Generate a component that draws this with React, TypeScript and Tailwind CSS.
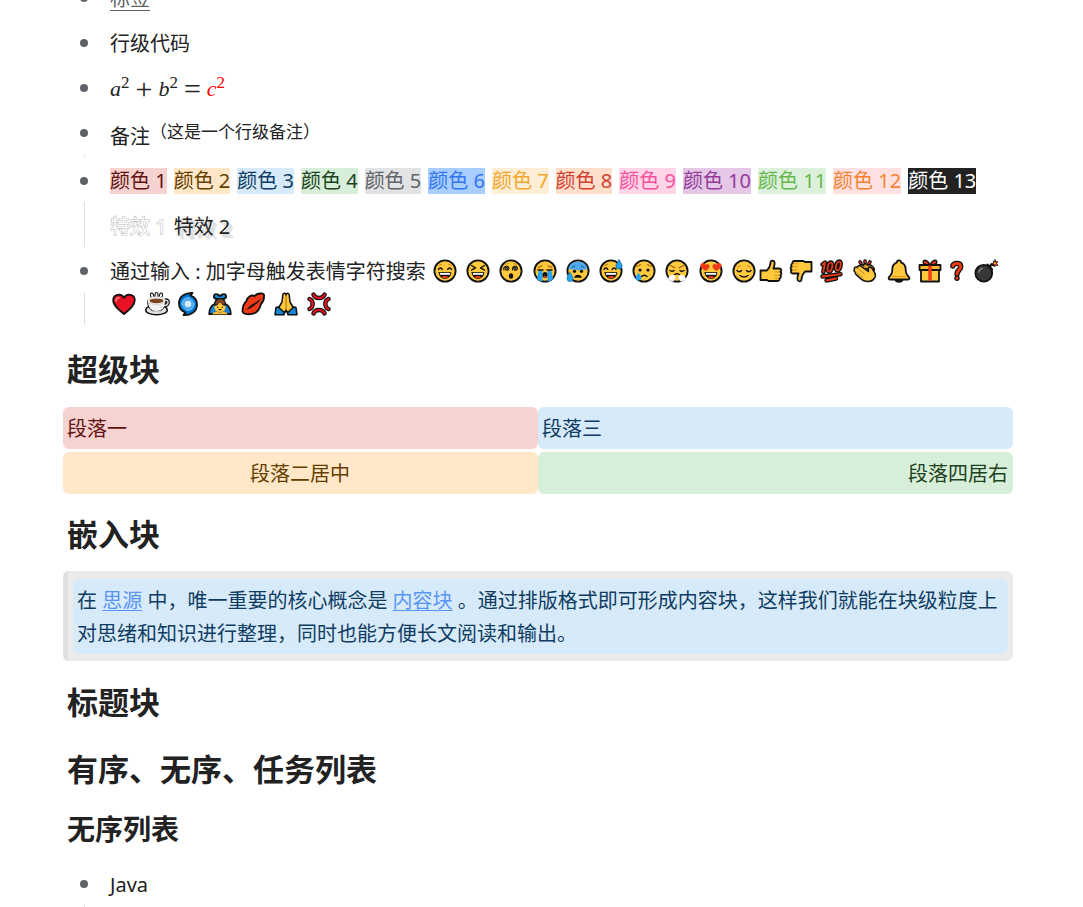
import type { ReactNode } from "react";

const INK = "#111111";
const YELLOW = "#ffc83d";
const BLUE = "#26a6f2";

type GlyphProps = { label: string; width?: string; children: ReactNode };

function Glyph({ label, width = "w-[28px]", children }: GlyphProps) {
  return (
    <svg
      role="img"
      aria-label={label}
      viewBox="0 0 24 24"
      className={`inline-block h-6 align-[-4px] ${width}`}
      fill="none"
      stroke={INK}
      strokeWidth="1.8"
      strokeLinecap="round"
      strokeLinejoin="round"
    >
      {children}
    </svg>
  );
}

function Face({ label, children }: { label: string; children: ReactNode }) {
  return (
    <Glyph label={label}>
      <circle cx="12" cy="12" r="10.600" fill={YELLOW} strokeWidth="1.800" />
      <g strokeWidth="1.400">{children}</g>
    </Glyph>
  );
}

function OpenMouth() {
  return (
    <>
      <path d="M6 13.500h12c-.3 3.800-2.600 6-6 6s-5.700-2.200-6-6z" fill={INK} strokeWidth=".6" />
      <path d="M7 14h10v1.800H7z" fill="#fff" stroke="none" />
      <path d="M8.500 18c2-1.500 5-1.500 7 0-2 1.600-5 1.600-7 0z" fill="#f03a17" stroke="none" />
    </>
  );
}

const faces: ReactNode[] = [
  <Face label="笑脸">
    <path d="M5.500 10.500c.8-2 3-2 3.800 0M14.700 10.500c.8-2 3-2 3.800 0" />
    <path d="M6 6.300l2.500-1M18 6.300l-2.500-1" stroke="#c98b16" strokeWidth="1" />
    <OpenMouth />
  </Face>,
  <Face label="大笑">
    <path d="M5.500 6.500l4 2.300-4 2.300M18.500 6.500l-4 2.300 4 2.300" />
    <OpenMouth />
  </Face>,
  <Face label="晕">
    <path d="M8 9.800c.8-.8 0-1.600-.8-1.200-1.300.8-.6 2.900 1 2.700 2-.2 2.200-3 .6-3.800-2.400-1-4.800 1.200-3.800 3.400M16.500 9.800c.8-.8 0-1.600-.8-1.200-1.300.8-.6 2.900 1 2.700 2-.2 2.200-3 .6-3.800-2.400-1-4.300 1.200-3.600 3.400" strokeWidth="1.100" />
    <path d="M6 5.500l3-1M15 4.500l3 1" stroke="#c98b16" strokeWidth="1" />
    <ellipse cx="12" cy="17" rx="2.200" ry="2.700" fill={INK} stroke="none" />
  </Face>,
  <Face label="大哭">
    <path d="M5.300 8.500l3.500-1.700M18.700 8.500l-3.500-1.700" stroke="#b27811" />
    <path d="M5 11h5M14 11h5" />
    <path d="M5.500 12h4v10.500c-2 0-4-1-5.500-2.500zM14.500 12h4l1.500 8c-1.500 1.500-3.500 2.500-5.500 2.500z" fill={BLUE} stroke="none" />
    <ellipse cx="12" cy="16" rx="2.500" ry="3" fill={INK} stroke="none" />
    <ellipse cx="12" cy="17.700" rx="1.500" ry="1" fill="#f03a17" stroke="none" />
  </Face>,
  <Face label="冷汗">
    <path d="M2.300 10C3.200 5.200 7 2.400 12 2.400s8.800 2.800 9.700 7.600c-6 1.600-13.500 1.600-19.400 0z" fill="#4ea9ed" stroke="none" />
    <path d="M6 8.500l3-1.800M18 8.500l-3-1.800" stroke="#145c96" strokeWidth="1" />
    <circle cx="8.500" cy="12.300" r="1.600" fill={INK} stroke="none" />
    <circle cx="15.500" cy="12.300" r="1.600" fill={INK} stroke="none" />
    <path d="M9 18c1.500-2 4.500-2 6 0z" fill={INK} />
    <path d="M4 13.500c2 3 3 4.500 3 6a3 3 0 0 1-6 0c0-1.500 1-3.500 3-6z" fill={BLUE} stroke="#0875ba" strokeWidth=".7" />
  </Face>,
  <Face label="尴尬">
    <path d="M5 10.500c.8-2 3-2 3.800 0M13.200 10.500c.8-2 3-2 3.800 0" />
    <path d="M6 6.300l2.500-1" stroke="#c98b16" />
    <OpenMouth />
    <path d="M20 1c1.800 2.800 3 4.400 3 6a3 3 0 0 1-6 0c0-1.600 1.200-3.200 3-6z" fill={BLUE} stroke="#075b92" strokeWidth=".8" />
  </Face>,
  <Face label="流泪">
    <path d="M5 7.500l3.500-1.800M19 7.500l-3.500-1.800" stroke="#b27811" />
    <circle cx="8" cy="11" r="1.600" fill={INK} stroke="none" />
    <circle cx="16" cy="11" r="1.600" fill={INK} stroke="none" />
    <path d="M9.500 17.500c1.500-1.700 4-1.700 5.500 0" />
    <path d="M6.500 13.500c1.800 2.500 2.700 4 2.700 5.200a2.700 2.700 0 0 1-5.400 0c0-1.200 1-2.700 2.700-5.200z" fill={BLUE} stroke="none" />
  </Face>,
  <Face label="生气">
    <path d="M5.500 6.500l4.500 2.300M18.500 6.500L14 8.800" stroke="#a56d10" />
    <path d="M5 11.500c1.400 1 3 1 4 0M15 11.500c1 1 2.600 1 4 0" />
    <path d="M9.500 15.500c1.500-1 3.500-1 5 0" />
    <path d="M9.800 16.700c-3-1.500-5.800 0-6.300 2.500-.2 1.500 1 2.300 2 2 1.300 1.700 3.700 1.300 4-.8 1.200-.8 1.300-2.600.3-3.700zM14.200 16.700c3-1.500 5.800 0 6.300 2.500.2 1.500-1 2.300-2 2-1.300 1.700-3.700 1.300-4-.8-1.200-.8-1.300-2.600-.3-3.700z" fill="#fff" stroke="#ddd" strokeWidth=".5" />
  </Face>,
  <Face label="喜欢">
    <OpenMouth />
    <path d="M6.800 12C3.500 10 .8 8.300 1.600 5.800c.8-2.300 3.800-2.200 4.600 0 1.700-1.800 4.500-.7 4.300 1.700-.1 2-2 3.200-3.700 4.500zM17.200 12c3.300-2 6-3.700 5.200-6.200-.8-2.300-3.800-2.200-4.600 0-1.700-1.800-4.500-.7-4.300 1.700.1 2 2 3.200 3.700 4.500z" fill="#f03a17" stroke="none" />
  </Face>,
  <Face label="安心">
    <path d="M5 11.500c1.300 1.600 3.300 1.600 4.500 0M14.500 11.500c1.200 1.600 3.200 1.600 4.500 0M8 16.500c2.300 1.800 5.700 1.800 8 0" />
    <path d="M5.500 8c1-.8 2-1.200 3.200-1.200M18.500 8c-1-.8-2-1.200-3.200-1.200" stroke="#c98b16" strokeWidth="1" />
  </Face>,
];

const thumbPath = "M1.500 11.500H8c2.300-2.500 3.500-5 3.600-8.500.1-2 3.800-2 4 1 .1 2-.5 4-1.200 5.500h6c2 0 2.500 2.500.8 3.300 1.700.8 1.500 3 .1 3.500 1 1 .6 2.800-.8 3.200.4 1.400-.5 2.500-2 2.500H9.500L8 21H1.500z";

const symbols: ReactNode[] = [
  <Glyph label="赞" width="w-[26px]">
    <path d={thumbPath} fill={YELLOW} />
    <path d="M16 13h4M16 16.300h4M16 19.300h3" stroke="#c98b16" strokeWidth=".8" />
  </Glyph>,
  <Glyph label="踩" width="w-[24px]">
    <g transform="rotate(180 12 12)">
      <path d={thumbPath} fill={YELLOW} />
      <path d="M16 13h4M16 16.300h4M16 19.300h3" stroke="#c98b16" strokeWidth=".8" />
    </g>
  </Glyph>,
  <Glyph label="一百分">
    <path d="M2.500 5.500L5 3.500 3.300 13M10.700 3.500c-3 .2-4.500 9-1.600 9.200C12.200 12.500 13.700 3.300 10.700 3.500zM19.300 2.500c-3.300.2-4.900 8.700-1.900 9C20.600 11.300 22 2.200 19.300 2.500z" strokeWidth="4.400" />
    <path d="M2.500 17.500l18-2.300M6.500 21.500l9.500-2" strokeWidth="4.400" />
    <path d="M2.500 5.500L5 3.500 3.300 13M10.700 3.500c-3 .2-4.500 9-1.600 9.200C12.200 12.500 13.700 3.300 10.700 3.500zM19.300 2.500c-3.300.2-4.900 8.700-1.900 9C20.600 11.300 22 2.200 19.300 2.500z" stroke="#f03a17" strokeWidth="1.700" />
    <path d="M2.500 17.500l18-2.300M6.500 21.500l9.500-2" stroke="#f03a17" strokeWidth="1.800" />
  </Glyph>,
  <Glyph label="鼓掌">
    <path d="M8 4.500L7 3M12 3.500V2M16 4.500L17 3" strokeWidth="3.600" />
    <path d="M8 4.500L7 3M12 3.500V2M16 4.500L17 3" stroke="#e0301e" strokeWidth="1.400" />
    <path d="M6.500 9c-.3-3.500 2.200-4.500 4-2.500.3-2 2.800-2.500 4.300-.5C18 5 21 8 21.500 11z" fill="#d69a1c" strokeWidth="1.500" />
    <path d="M1.500 10.500c-.8-2 1-3.300 2.700-2C4.700 6.500 6.900 6 8.300 7.500l7 5c.3-2-.3-4 1.200-4.500 2.700-.6 3.300 3.200 5 5.500 2.700 4-1.200 9-6.300 9-3.800 0-6.500-1.500-9.200-4.300-2-2-4.500-2.700-3.800-5-1.200-.7-1.500-1.800-.7-2.700z" fill={YELLOW} strokeWidth="1.500" />
    <path d="M4.500 9l7 6M2.800 13.200l7 5.500" stroke="#b77b14" strokeWidth=".9" />
  </Glyph>,
  <Glyph label="铃铛">
    <path d="M8.500 20.500c.5 3 6.500 3 7 0z" fill="#d69a1c" />
    <path d="M12 1.300c1.500 0 2 1 2 2 3.500 1.200 4.700 3.700 4.700 7.200 0 4 .9 5.500 3.300 7.500.7 1 .4 2.500-1 2.500H3c-1.400 0-1.700-1.500-1-2.500 2.400-2 3.300-3.500 3.300-7.500 0-3.500 1.200-6 4.700-7.200 0-1 .5-2 2-2z" fill={YELLOW} />
    <path d="M5.500 17.500h13" stroke="#d69a1c" strokeWidth="1.200" />
  </Glyph>,
  <Glyph label="礼物" width="w-[24px]">
    <path d="M3 10h18v12.500H3z" fill={YELLOW} />
    <path d="M1.500 6h21v5h-21z" fill="#f5b52d" />
    <path d="M10.300 6h3.400v15.600h-3.400z" fill="#f03a17" stroke="none" />
    <path d="M12 6C8 6 4 5 5.500 2c1.500-2 5 .5 6.500 4 1.500-3.500 5-6 6.500-4C20 5 16 6 12 6z" fill="#f03a17" strokeWidth="1.400" />
  </Glyph>,
  <Glyph label="问号" width="w-[20px]">
    <path d="M7 6c1-4 9-4.500 9.500.5.4 4-4.500 4.500-4.500 9M12 20.500v.1" strokeWidth="6.500" />
    <path d="M7 6c1-4 9-4.500 9.500.5.4 4-4.500 4.500-4.500 9M12 20.500v.1" stroke="#f03a17" strokeWidth="3.500" />
  </Glyph>,
  <Glyph label="炸弹">
    <path d="M15.500 8l2-2.700 2.200.7" strokeWidth="2.400" />
    <path d="M13.500 5.500l4.800 4.800-3 1.500-3.300-3.300z" fill="#333" />
    <circle cx="9.800" cy="14.200" r="8.400" fill="#373737" />
    <path d="M5 13c.3-2 1.500-3.200 3.400-3.700" stroke="#888" strokeWidth="1.300" />
    <path d="M21 .8l.7 2 2-.3-1 2 1.200 2-2.200-.4-1 1.700-.7-2-2-.6 1.700-1.200-.5-2 1.600.9z" fill="#f03a17" strokeWidth=".8" />
    <circle cx="21" cy="4.200" r=".9" fill={YELLOW} stroke="none" />
  </Glyph>,
  <Glyph label="爱心">
    <path d="M12 22C7 18 1.200 13.500 1.200 8.200c0-6 8-7.600 10.800-2.500C14.800.6 22.800 2.200 22.800 8.200 22.800 13.500 17 18 12 22z" fill="#e81224" />
    <path d="M4 9c0-2 1.200-3.200 3-3.200" stroke="#f4777f" strokeWidth="1.700" />
  </Glyph>,
  <Glyph label="咖啡">
    <path d="M7.500 5l-.7-2.500M11.500 5V2M15.500 5l.7-2.500" strokeWidth="4" />
    <path d="M7.500 5l-.7-2.500M11.500 5V2M15.500 5l.7-2.500" stroke="#fff" strokeWidth="1.800" />
    <path d="M20 8.500c4.500-1.500 4 5.500-1 5" strokeWidth="3.800" />
    <ellipse cx="11.500" cy="18" rx="10.800" ry="4.800" fill="#e4e4e4" strokeWidth="1.500" />
    <path d="M2.500 8.500h18c0 6.500-2.500 11-9 11s-9-4.500-9-11z" fill="#f1f1f1" strokeWidth="1" />
    <path d="M6.500 18.200c3 1.500 7 1.500 10 0-2 2.500-8 2.500-10 0z" fill="#e4e4e4" stroke="none" />
    <path d="M20 8.500c4.500-1.500 4 5.500-1 5" stroke="#f1f1f1" strokeWidth="1.300" />
    <ellipse cx="11.500" cy="8.500" rx="9" ry="3.800" fill="#fff" stroke="#bbb" strokeWidth=".8" />
    <ellipse cx="11.500" cy="8.800" rx="7" ry="2.400" fill="#7b431f" stroke="none" />
  </Glyph>,
  <Glyph label="旋风" width="w-[24px]">
    <path d="M16.500 1C9.500.7 3 4 3 11.500c0 4.500 2.500 7.500 6.500 9L7.500 23C14.500 23.300 21 20 21 12.500c0-4.500-2.500-7.500-6.500-9z" fill="#0078d7" />
    <circle cx="12" cy="12" r="6.300" fill="#4aa9ef" stroke="none" />
    <circle cx="12" cy="12" r="3.300" fill="#d3edff" stroke="none" />
    <path d="M6 13c0-5 3-7.500 7-7.500M18 11c0 5-3 7.500-7 7.500" stroke="#80cafd" strokeWidth="1" />
  </Glyph>,
  <Glyph label="鞠躬">
    <path d="M8.500 7C5 6.500 5 1.700 8.500 2.200c1.500 0 2 .8 3.500 1.800 1.500-1 2-1.800 3.500-1.800 3.500-.5 3.500 4.300 0 4.800z" fill="#1686d9" />
    <path d="M1.200 22c0-4 1.500-8 5.300-10h11c3.800 2 5.300 6 5.300 10z" fill="#1686d9" />
    <path d="M6.500 13c0-4 2.300-6.500 5.500-6.500s5.500 2.500 5.500 6.500z" fill="#7b4526" strokeWidth="1.200" />
    <path d="M6.500 14c2.200-.2 4-1.500 5.500-3.500 1.500 2 3.300 3.300 5.500 3.500.3 3.700-2 6.500-5.500 6.500s-5.800-2.800-5.500-6.500z" fill={YELLOW} stroke="none" />
    <path d="M9.700 15.200h.1M14.300 15.200h.1M11 17.600h2" strokeWidth="1.200" />
    <path d="M4.500 22c1-2.500 4.500-3 7.500-1.300 3-1.700 6.500-1.200 7.500 1.300z" fill={YELLOW} stroke="#a36d12" strokeWidth=".6" />
  </Glyph>,
  <Glyph label="嘴唇">
    <path d="M1.500 19.500c0-5 1-8 4-10.500 1-4.500 5-6.500 8-5 3-3 8-3.200 9.500-1.500.5 5-1 7.500-3 9.500-1.500 6-5.500 10-10.500 10.200-4 .2-7.500-.5-8-2.700z" fill="#f03a17" />
    <path d="M5 17.500c3-2 4-4.500 7.500-5.800 2.500-1 4.500-3 7-5.200-1.800 4.500-4.500 5.500-7 7.500-2.500 2-4 3-7.500 3.500z" fill={INK} stroke="none" />
  </Glyph>,
  <Glyph label="祈祷">
    <path d="M1 22.700l1-7.200 4-1 5 4.700-1 3.500zM23 22.700l-1-7.200-4-1-5 4.700 1 3.500z" fill="#1686d9" strokeWidth="1.500" />
    <path d="M12 3c-.6-2.500-3-2-3.200 0L8 10l-3.200 5.500 5.700 5.200L12 18l1.500 2.700 5.700-5.200L16 10l-.8-7C15 1 12.600.5 12 3z" fill={YELLOW} strokeWidth="1.500" />
    <path d="M12 4v13.500" stroke="#9c680c" strokeWidth="1" />
  </Glyph>,
  <Glyph label="愤怒">
    <g strokeWidth="4.400">
      <path d="M6.500 2.500c1.500 4.700 9.500 4.700 11 0M6.500 21.500c1.500-4.700 9.500-4.700 11 0M2.500 7c4.200 1.500 4.200 8.500 0 10M21.500 7c-4.200 1.500-4.200 8.500 0 10" />
    </g>
    <g stroke="#e81224" strokeWidth="2.100">
      <path d="M6.500 2.500c1.500 4.700 9.500 4.700 11 0M6.500 21.500c1.500-4.700 9.500-4.700 11 0M2.500 7c4.200 1.500 4.200 8.500 0 10M21.500 7c-4.200 1.500-4.200 8.500 0 10" />
    </g>
  </Glyph>,
];

const swatches = [
  "bg-[#f6d2d0] text-[#5f1412]",
  "bg-[#ffe7c7] text-[#653e00]",
  "bg-[#d7eaf9] text-[#0f3c63]",
  "bg-[#d7eed9] text-[#1d421f]",
  "bg-[#e2e3e4] text-[#5f6368]",
  "bg-[#a8cfff] text-[#3575f0]",
  "bg-[#fdeed5] text-[#f3a72e]",
  "bg-[#ffdfcc] text-[#d23f31]",
  "bg-[#ffd5e7] text-[#f3529f]",
  "bg-[#e5c7e6] text-[#923c99]",
  "bg-[#ddf0dc] text-[#65b84d]",
  "bg-[#ffe1e1] text-[#f38330]",
  "bg-[#222222] text-white",
];

const block = "rounded-md pr-[5px] pl-1 pt-[5px] pb-1 leading-[33px]";
const h2 = "px-1 text-[31px] leading-[40px] font-bold";
const variable = "text-[22px] italic";
const exponent = "top-0 pb-3 text-[17px] leading-none";
const operator = "px-1.5 text-[30px]";

function Item({ children }: { children: ReactNode }) {
  return (
    <li className="grid grid-cols-[43px_minmax(0,1fr)]">
      <div className="flex flex-col items-center pr-px" aria-hidden="true">
        <span className="flex h-[42px] shrink-0 items-center">
          <span className="size-2 rounded-full bg-[#5f6368]" />
        </span>
        <span className="mb-[3px] w-px grow bg-[#dfe0e1]" />
      </div>
      <div className="flex flex-col gap-1 pb-[3px]">{children}</div>
    </li>
  );
}

export default function App() {
  return (
    <main className="h-screen overflow-hidden bg-white pr-[70px] pl-[63px] font-['Noto_Sans','Noto_Sans_CJK_SC',sans-serif] text-xl text-[#222222]">
      <article lang="zh-CN" className="-mt-[23px]">
        <ul>
          <Item>
            <p className={block}>
              <span className="text-[#5f6368] underline decoration-1 underline-offset-4">标签</span>
            </p>
          </Item>
          <Item>
            <p className={block}>行级代码</p>
          </Item>
          <Item>
            <p className={`${block} flex items-center font-['Liberation_Serif',serif]`}>
              <span className={variable}>a</span>
              <sup className={exponent}>2</sup>
              <span className={operator}>+</span>
              <span className={variable}>b</span>
              <sup className={exponent}>2</sup>
              <span className={operator}>=</span>
              <span className={`${variable} text-[#ff0000]`}>c</span>
              <sup className={`${exponent} text-[#ff0000]`}>2</sup>
            </p>
          </Item>
          <Item>
            <p className={`${block} flex items-start`}>
              <span className="pt-[3px]">备注</span>
              <span className="text-[17px] leading-[30px]">（这是一个行级备注）</span>
            </p>
          </Item>
          <Item>
            <p className={`${block} flex flex-wrap gap-x-[7px]`}>
              {swatches.map((tone, i) => (
                <span key={tone} className={`my-[3px] leading-[26px] ${tone}`}>
                  颜色 {i + 1}
                </span>
              ))}
            </p>
            <p className={`${block} flex gap-x-[7px]`}>
              <span className="text-white [-webkit-text-stroke:1px_#b4b4b4] [paint-order:stroke_fill]">特效 1</span>
              <span className="[text-shadow:2px_2px_#e0e1e2,3px_3px_#e0e1e2,4px_4px_#e0e1e2]">特效 2</span>
            </p>
          </Item>
          <Item>
            <p className={block}>
              通过输入 : 加字母触发表情字符搜索{" "}
              {faces.map((face, i) => (
                <span key={i}>
                  {i > 0 && " "}
                  {face}
                </span>
              ))}
              {symbols.map((symbol, i) => (
                <span key={i}>
                  {i > 0 && " "}
                  {symbol}
                </span>
              ))}
            </p>
          </Item>
        </ul>

        <h2 className={`mt-[21px] mb-[18px] ${h2}`}>超级块</h2>
        <div className="grid grid-cols-2 gap-y-[3px]">
          <p className={`${block} bg-[#f6d2d0] text-[#5f1412]`}>段落一</p>
          <p className={`${block} bg-[#d7eaf9] text-[#0f3c63]`}>段落三</p>
          <p className={`${block} bg-[#ffe7c7] text-center text-[#653e00]`}>段落二居中</p>
          <p className={`${block} bg-[#d7eed9] text-right text-[#1d421f]`}>段落四居右</p>
        </div>

        <h2 className={`mt-5 mb-[17px] ${h2}`}>嵌入块</h2>
        <div className="rounded-md border-l-[5px] border-[#dfdfdf] bg-[#ebebeb] pt-2 pr-[5px] pb-[7px] pl-[5px]">
          <p className={`${block} bg-[#d7eaf9] text-[#0f3c63]`}>
            在{" "}
            <a href="#siyuan" className="text-[#5a95f5] underline decoration-1 underline-offset-2">
              思源
            </a>{" "}
            中，唯一重要的核心概念是{" "}
            <a href="#block" className="text-[#5a95f5] underline decoration-1 underline-offset-2">
              内容块
            </a>{" "}
            。通过排版格式即可形成内容块，这样我们就能在块级粒度上对思绪和知识进行整理，同时也能方便长文阅读和输出。
          </p>
        </div>

        <h2 className={`mt-[21px] ${h2}`}>标题块</h2>
        <h2 className={`mt-[27px] mb-4 ${h2}`}>有序、无序、任务列表</h2>
        <h3 className="mt-[22px] mb-4 px-1 text-[28px] leading-[36px] font-bold">无序列表</h3>
        <ul>
          <Item>
            <p className={block}>Java</p>
            <p className={block}></p>
          </Item>
        </ul>
      </article>
    </main>
  );
}
